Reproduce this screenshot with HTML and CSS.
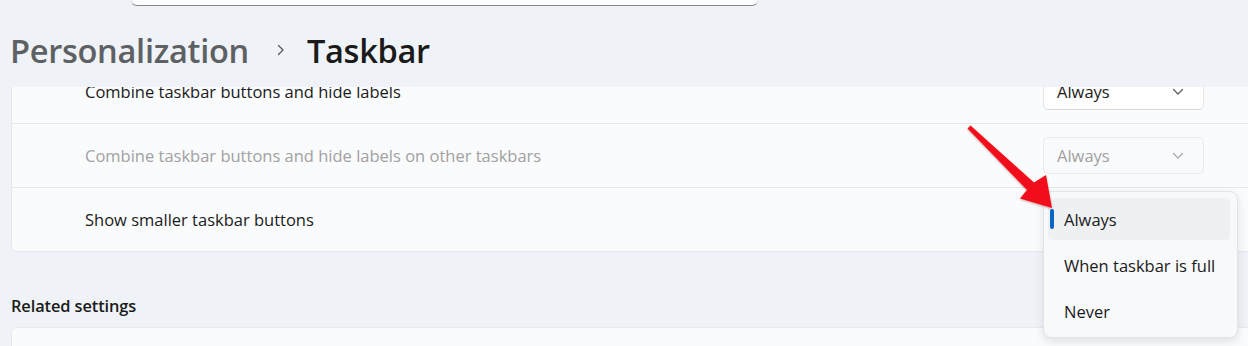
FILE: index.html
```html
<!DOCTYPE html>
<html>
<head>
<meta charset="utf-8">
<link rel="stylesheet" href="styles.css">
</head>
<body>
<div class="page">
  <div class="header">
    <div class="search"></div>
    <div class="crumbs">
      <span class="crumb-parent">Personalization</span>
      <svg class="crumb-sep" width="10" height="14" viewBox="0 0 10 14"><path d="M2.5 2.5 L7 7 L2.5 11.5" fill="none" stroke="#5c5c5c" stroke-width="1.4" stroke-linecap="round" stroke-linejoin="round"/></svg>
      <span class="crumb-current">Taskbar</span>
    </div>
  </div>
  <div class="content">
    <div class="card">
      <div class="row">
        <span class="label">Combine taskbar buttons and hide labels</span>
        <div class="dropdown"><span>Always</span><svg width="12" height="8" viewBox="0 0 12 8"><path d="M1.5 1.5 L6 6 L10.5 1.5" fill="none" stroke="#5c5c5c" stroke-width="1.2" stroke-linecap="round" stroke-linejoin="round"/></svg></div>
      </div>
      <div class="row">
        <span class="label disabled">Combine taskbar buttons and hide labels on other taskbars</span>
        <div class="dropdown off"><span>Always</span><svg width="12" height="8" viewBox="0 0 12 8"><path d="M1.5 1.5 L6 6 L10.5 1.5" fill="none" stroke="#a8a8a8" stroke-width="1.2" stroke-linecap="round" stroke-linejoin="round"/></svg></div>
      </div>
      <div class="row">
        <span class="label">Show smaller taskbar buttons</span>
      </div>
    </div>
    <div class="section-title">Related settings</div>
    <div class="card card-2"></div>
  </div>
  <div class="menu">
    <div class="item selected"><span class="pill"></span>Always</div>
    <div class="item">When taskbar is full</div>
    <div class="item">Never</div>
  </div>
  <svg class="arrow" width="1248" height="346" viewBox="0 0 1248 346">
    <defs>
      <filter id="sh" x="-20%" y="-20%" width="140%" height="140%">
        <feDropShadow dx="0" dy="1" stdDeviation="1" flood-color="#700000" flood-opacity="0.35"/>
      </filter>
    </defs>
    <polygon filter="url(#sh)" fill="#f2111a" points="970.5,125.5 1034,182.5 1046,175 1052,208 1020,198.5 1027,190 967.5,128.5"/>
  </svg>
</div>
</body>
</html>
```
FILE: styles.css
```css
html, body {
  margin: 0;
  padding: 0;
}
body {
  background: #eff3f7;
  font-family: "Open Sans", "Noto Sans", sans-serif;
  color: #1b1b1b;
  width: 1248px;
  height: 346px;
  overflow: hidden;
}
.page {
  position: relative;
  width: 1248px;
  height: 346px;
  display: flex;
  flex-direction: column;
}
.header {
  height: 87px;
  flex: none;
  display: flex;
  flex-direction: column;
}
.search {
  margin-left: 131px;
  width: 627px;
  height: 5px;
  background: #fbfcfd;
  border-bottom: 1px solid #868686;
  border-radius: 0 0 7px 7px;
}
.crumbs {
  display: flex;
  align-items: center;
  padding-left: 10px;
  margin-top: 20px;
  height: 48px;
  font-size: 32.6px;
  font-weight: 600;
  letter-spacing: -0.3px;
}
.crumb-parent {
  color: #5e6164;
}
.crumb-sep {
  margin: 0 21px 0 27px;
}
.crumb-current {
  color: #1a1a1a;
}
.content {
  flex: 1;
  overflow: hidden;
  padding-left: 11px;
  display: flex;
  flex-direction: column;
}
.card {
  width: 1257px;
  flex: none;
  background: #fafbfc;
  border: 1px solid #e6e8eb;
  border-radius: 6px;
  margin-top: -28px;
}
.row {
  height: 63px;
  display: flex;
  align-items: center;
  justify-content: space-between;
  padding-left: 73px;
  padding-right: 65px;
  border-top: 1px solid #e5e7ea;
  font-size: 16.5px;
}
.row:first-child {
  border-top: none;
}
.label.disabled {
  color: #a1a1a1;
}
.dropdown {
  width: 161px;
  height: 37px;
  box-sizing: border-box;
  display: flex;
  align-items: center;
  justify-content: space-between;
  padding: 0 19px 0 13px;
  background: #fefefe;
  border: 1px solid #e4e6e8;
  border-bottom-color: #d6d8da;
  border-radius: 5px;
  font-size: 16.5px;
}
.dropdown.off {
  background: #f9fafb;
  border-color: #e9ebed;
  color: #a1a1a1;
}
.section-title {
  margin-top: 43px;
  font-size: 16.4px;
  font-weight: 600;
  color: #1a1a1a;
  height: 22px;
  line-height: 22px;
  letter-spacing: -0.1px;
}
.card-2 {
  margin-top: 10px;
  height: 40px;
}
.menu {
  position: absolute;
  left: 1043px;
  top: 191px;
  width: 195px;
  height: 147px;
  box-sizing: border-box;
  background: #f8f9fa;
  border: 1px solid #e1e3e5;
  border-radius: 8px;
  box-shadow: 0 4px 10px rgba(0, 0, 0, 0.10);
  padding: 6px 7px 0 4px;
  display: flex;
  flex-direction: column;
  gap: 4px;
}
.item {
  position: relative;
  height: 42px;
  display: flex;
  align-items: center;
  padding-left: 16px;
  border-radius: 4px;
  font-size: 16.5px;
  color: #1b1b1b;
}
.item.selected {
  background: #eef0f2;
}
.pill {
  position: absolute;
  left: 2px;
  top: 11px;
  width: 4px;
  height: 20px;
  border-radius: 2px;
  background: #0a64c2;
}
.arrow {
  position: absolute;
  left: 0;
  top: 0;
  pointer-events: none;
}
```
